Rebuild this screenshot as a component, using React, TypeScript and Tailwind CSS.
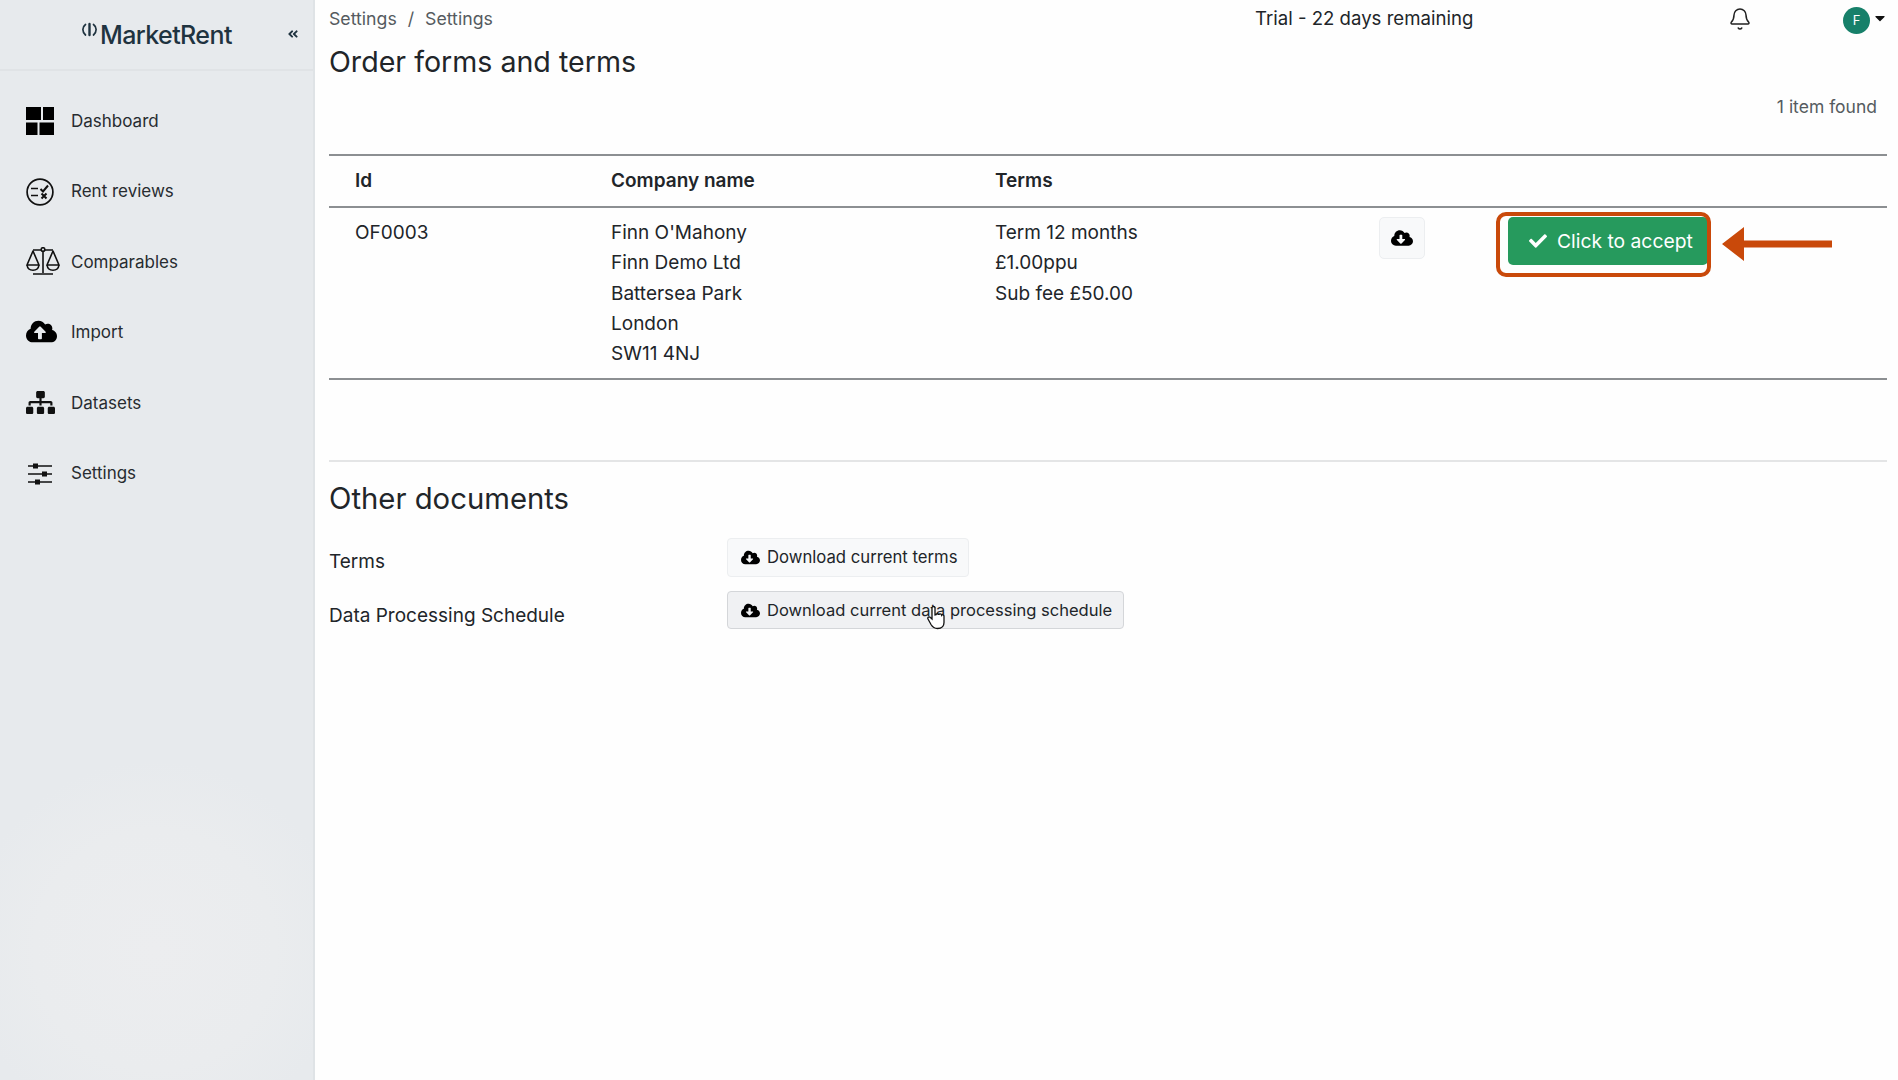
import { Bell } from "lucide-react";
import { FaAngleDoubleLeft, FaCaretDown, FaCheck, FaCloudDownloadAlt, FaCloudUploadAlt, FaSitemap } from "react-icons/fa";
import type { ReactNode } from "react";

function DashIcon() {
  return (
    <svg width="28" height="28" viewBox="0 0 28 28" fill="#000">
      <rect x="0" y="0" width="15" height="13" />
      <rect x="17" y="0" width="11" height="13" />
      <rect x="0" y="15.5" width="11.5" height="12.5" />
      <rect x="13.5" y="15.5" width="14.5" height="12.5" />
    </svg>
  );
}

function ReviewIcon() {
  return (
    <svg width="28" height="28" viewBox="0 0 28 28" fill="none" stroke="#111" strokeWidth="1.7">
      <circle cx="14" cy="14" r="12.9" />
      <path d="M5 10.5h7M5 17.5h7" />
      <path d="M14.5 11l2.5 2.5 5-6" strokeWidth="2" />
      <path d="M15.5 15.5l5 5M20.5 15.5l-5 5" strokeWidth="2" />
    </svg>
  );
}

function ScaleIcon() {
  return (
    <svg width="34" height="30" viewBox="0 0 34 30" fill="none" stroke="#111" strokeWidth="1.6">
      <path d="M7 3h20M17 4v22M7 27h20" />
      <circle cx="17" cy="2.500" r="1.800" fill="#e7eaed" />
      <path d="M7 4 1 18h12zM27 4l-6 14h12z" strokeLinejoin="round" />
      <path d="M1 18c1 7 11 7 12 0M21 18c1 7 11 7 12 0" />
    </svg>
  );
}

function SlidersIcon() {
  return (
    <svg width="24" height="22" viewBox="0 0 24 22" fill="#111" className="ml-[2px]">
      <path d="M0 2.200h24v1.600H0zM0 10.200h24v1.600H0zM0 18.200h24v1.600H0z" />
      <rect x="5" y="0.500" width="5" height="5" />
      <rect x="14" y="8.500" width="5" height="5" />
      <rect x="7" y="16.500" width="5" height="5" />
    </svg>
  );
}

function LogoMark() {
  return (
    <svg width="17" height="16" viewBox="0 0 17 14" fill="none" stroke="#1f3340" strokeWidth="1.700" strokeLinecap="round" className="-mt-[10px]">
      <path d="M8.500 1v11" strokeWidth="2.400" />
      <path d="M4.500 1.500C1 4 1 9 4.500 12" />
      <path d="M12.500 1.500C16 4 16 9 12.500 12" />
    </svg>
  );
}

function HandCursor() {
  return (
    <svg width="18" height="25" viewBox="0 0 18 24" className="absolute left-[199px] top-[13px]">
      <path d="M5 2.500c0-2 3-2 3 0v7l1-.2c0-1.400 2.600-1.400 2.800 0 .3-1.200 2.600-1.200 2.800.4.500-.8 2.400-.6 2.400 1V17c0 4-2.500 6-6.500 6-3.500 0-5-1.500-6.500-4L1 13.500c-.8-1.500 1-3 2.400-1.500L5 13.500z" fill="#fff" stroke="#111" strokeWidth="1.300" />
    </svg>
  );
}

const NAV: { label: string; icon: ReactNode }[] = [
  { label: "Dashboard", icon: <DashIcon /> },
  { label: "Rent reviews", icon: <ReviewIcon /> },
  { label: "Comparables", icon: <ScaleIcon /> },
  { label: "Import", icon: <FaCloudUploadAlt size={31} color="#000" className="-mt-[3px]" /> },
  { label: "Datasets", icon: <FaSitemap size={29} color="#111" className="-mt-[1px]" /> },
  { label: "Settings", icon: <SlidersIcon /> },
];

export default function App() {
  return (
    <div className="flex h-[1080px] w-[1898px] overflow-hidden bg-[#fefefe] text-[#212529] font-['Inter',sans-serif]">
      {/* Sidebar */}
      <aside className="w-[315px] shrink-0 border-r-2 border-[#dfe3e6] bg-[#e7eaed] bg-[radial-gradient(circle_at_155px_950px,#ecedef_0,#eaecee_120px,#e7eaed_190px)]">
        <div className="relative flex h-[71px] items-center border-b-2 border-[#e0e3e6] pl-[81px]">
          <LogoMark />
          <span className="ml-[2px] mt-[3px] text-[25px] font-medium tracking-[-0.6px] text-[#1f3340]">MarketRent</span>
          <FaAngleDoubleLeft size={12} color="#1f3340" className="absolute left-[287px] top-[28px]" />
        </div>
        <nav className="mt-[15px] flex flex-col pl-[26px]">
          {NAV.map(item => (
            <div key={item.label} className="flex h-[70.500px] items-center">
              <span className="flex w-[45px] shrink-0 items-center">{item.icon}</span>
              <span className="text-[17px] text-[#272c30]">{item.label}</span>
            </div>
          ))}
        </nav>
      </aside>

      {/* Main */}
      <main className="min-w-0 flex-1 pl-[14px] pr-[11px]">
        <div className="flex h-[38px] items-center">
          <div className="flex w-[926px] shrink-0 gap-[11px] text-[17.700px] text-[#555b60]">
            <span>Settings</span><span>/</span><span>Settings</span>
          </div>
          <span className="w-[473px] shrink-0 text-[18.600px]">Trial - 22 days remaining</span>
          <Bell size={24} strokeWidth={1.500} color="#222" className="shrink-0" />
          <span className="ml-[91px] mt-[3px] flex h-[27px] w-[27px] shrink-0 items-center justify-center rounded-full bg-[#17806a] text-[13px] text-white">F</span>
          <FaCaretDown size={16} color="#111" className="-mt-[3px] ml-[2px] shrink-0" />
        </div>
        <h1 className="mt-[3px] text-[28.600px] leading-[42px] text-[#212529]">Order forms and terms</h1>
        <p className="mt-[12px] pr-[10px] text-right text-[17.500px] leading-[24px] text-[#555b60]">1 item found</p>

        <table className="mt-[35px] w-full table-fixed border-collapse border-y-2 border-[#8c8f92] text-[19px]">
          <thead>
            <tr className="h-[52px] border-b-2 border-[#8c8f92] text-left">
              <th className="w-[282px] pl-[26px] pt-[1px] font-semibold">Id</th>
              <th className="w-[384px] pt-[1px] font-semibold">Company name</th>
              <th className="w-[384px] pt-[1px] font-semibold">Terms</th>
              <th className="w-[117px]" />
              <th />
            </tr>
          </thead>
          <tbody>
            <tr className="h-[172px] align-top leading-[30.250px]">
              <td className="pl-[26px] pt-[10px]">OF0003</td>
              <td className="pt-[10px]">
                <div>Finn O'Mahony</div>
                <div>Finn Demo Ltd</div>
                <div>Battersea Park</div>
                <div>London</div>
                <div>SW11 4NJ</div>
              </td>
              <td className="pt-[10px]">
                <div>Term 12 months</div>
                <div>£1.00ppu</div>
                <div>Sub fee £50.00</div>
              </td>
              <td className="pt-[9px]">
                <button className="flex h-[42px] w-[46px] items-center justify-center rounded-[5px] border border-[#eceef0] bg-[#f8f9fa]">
                  <FaCloudDownloadAlt size={22} color="#000" />
                </button>
              </td>
              <td className="pt-[4px]">
                <div className="relative pl-[12px] pt-[5px]">
                  <button className="flex h-[48px] w-[200px] items-center gap-[10px] rounded-[5px] bg-[#269a5d] pl-[21px] text-[19.300px] text-white">
                    <FaCheck size={18} color="#fff" />
                    Click to accept
                  </button>
                  <span className="absolute left-0 top-0 h-[65px] w-[215px] rounded-[10px] border-[4px] border-[#c9490a]" />
                  <svg width="110" height="34" viewBox="0 0 110 34" className="absolute left-[226px] top-[15px]" fill="#c9490a">
                    <path d="M0 17 22 0v13.500h88v7H22V34z" />
                  </svg>
                </div>
              </td>
            </tr>
          </tbody>
        </table>

        <hr className="mt-[80px] border-t-2 border-[#e4e5e6]" />
        <h2 className="mt-[16px] text-[29.300px] leading-[42px] text-[#212529]">Other documents</h2>

        <div className="mt-[18px] flex flex-col gap-[13px] text-[19px]">
          <div className="flex items-center">
            <span className="mt-[9px] w-[398px]">Terms</span>
            <button className="flex h-[39px] items-center gap-[7px] rounded-[4px] border border-[#eceef0] bg-[#f8f9fa] pl-[13px] pr-[11px] text-[16.700px]">
              <FaCloudDownloadAlt size={19} color="#000" />Download current terms
            </button>
          </div>
          <div className="flex items-center">
            <span className="mt-[12px] w-[398px]">Data Processing Schedule</span>
            <button className="relative flex h-[38px] items-center gap-[7px] rounded-[4px] border border-[#d4d6d9] bg-[#f0f1f3] pl-[13px] pr-[11px] text-[16.550px]">
              <FaCloudDownloadAlt size={19} color="#000" />Download current data processing schedule
              <HandCursor />
            </button>
          </div>
        </div>
      </main>
    </div>
  );
}
